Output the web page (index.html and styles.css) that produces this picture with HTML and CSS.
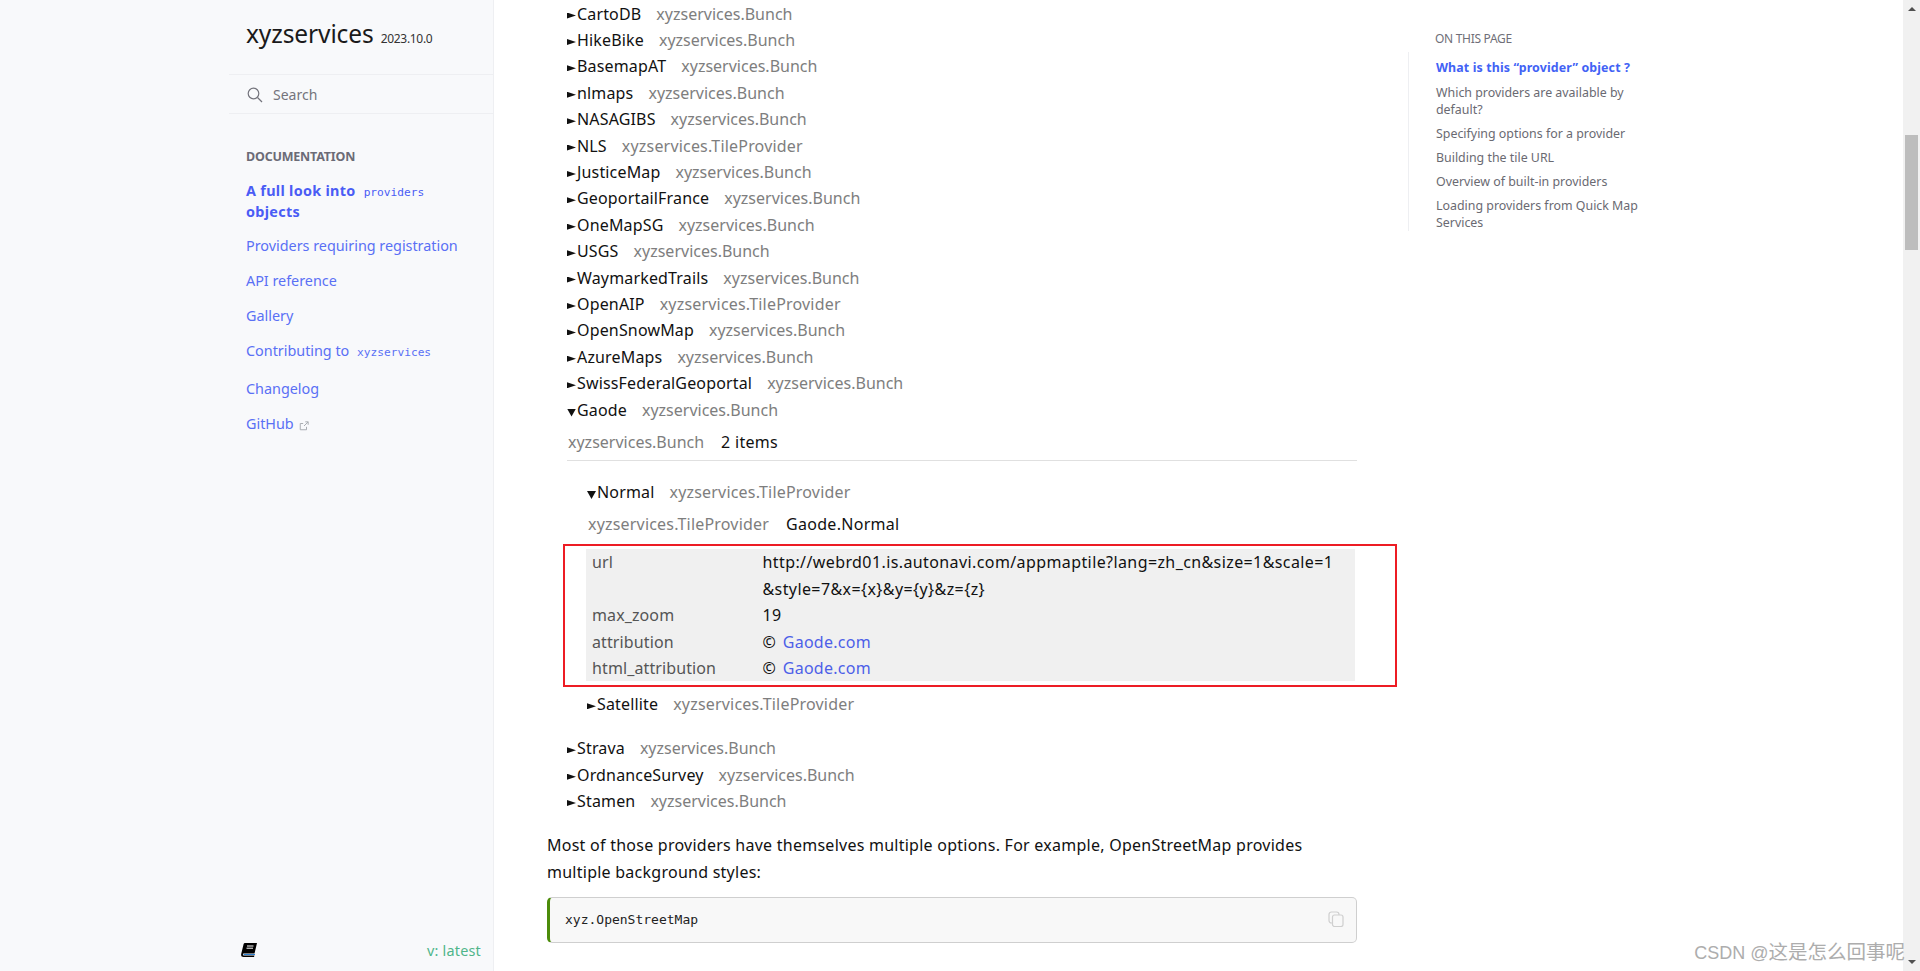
FILE: index.html
```html
<!DOCTYPE html>
<html lang="en">
<head>
<meta charset="utf-8">
<title>xyzservices</title>
<link rel="stylesheet" href="styles.css">
</head>
<body>
<aside class="sidebar">
  <div class="brand"><span class="brand-name">xyzservices</span><span class="brand-ver">2023.10.0</span></div>
  <div class="search">
    <svg class="search-icon" viewBox="0 0 16 16" width="16" height="16"><circle cx="6.5" cy="6.5" r="5.3"/><path d="M10.5 10.5L15 15"/></svg>
    <span>Search</span>
  </div>
  <nav class="nav">
    <div class="nav-title">DOCUMENTATION</div>
    <a class="nav-link current">A full look into <code class="nav-code">providers</code> objects</a>
    <a class="nav-link">Providers requiring registration</a>
    <a class="nav-link">API reference</a>
    <a class="nav-link">Gallery</a>
    <a class="nav-link tall">Contributing to <code class="nav-code">xyzservices</code></a>
    <a class="nav-link">Changelog</a>
    <a class="nav-link">GitHub <svg class="ext" viewBox="0 0 12 12" width="10" height="10"><path d="M9 7v3.5H1.5V3H5M6 6l5-5M7.5 1H11v3.5"/></svg></a>
  </nav>
  <div class="side-foot">
    <svg class="book" viewBox="0 0 16 14" width="16" height="14"><path class="book-body" d="M4 0H16L13.5 10.5H3C1.5 10.5 1.5 12.5 3 12.5H13.5L13 14H2.5C.5 14-.3 12.5.3 10.5L2.5 1.5C2.7.5 3.3 0 4 0Z"/><path class="book-lines" d="M6 3h6.5M5.5 5.2h6.5"/><path class="book-page" d="M2.6 11.5H14"/></svg>
    <span class="version">v: latest</span>
  </div>
</aside>
<main class="content">
  <div class="list">
    <div class="row"><i class="tri"></i>CartoDB<span class="type">xyzservices.Bunch</span></div>
    <div class="row"><i class="tri"></i>HikeBike<span class="type">xyzservices.Bunch</span></div>
    <div class="row"><i class="tri"></i>BasemapAT<span class="type">xyzservices.Bunch</span></div>
    <div class="row"><i class="tri"></i>nlmaps<span class="type">xyzservices.Bunch</span></div>
    <div class="row"><i class="tri"></i>NASAGIBS<span class="type">xyzservices.Bunch</span></div>
    <div class="row"><i class="tri"></i>NLS<span class="type tile">xyzservices.TileProvider</span></div>
    <div class="row"><i class="tri"></i>JusticeMap<span class="type">xyzservices.Bunch</span></div>
    <div class="row"><i class="tri"></i>GeoportailFrance<span class="type">xyzservices.Bunch</span></div>
    <div class="row"><i class="tri"></i>OneMapSG<span class="type">xyzservices.Bunch</span></div>
    <div class="row"><i class="tri"></i>USGS<span class="type">xyzservices.Bunch</span></div>
    <div class="row"><i class="tri"></i>WaymarkedTrails<span class="type">xyzservices.Bunch</span></div>
    <div class="row"><i class="tri"></i>OpenAIP<span class="type tile">xyzservices.TileProvider</span></div>
    <div class="row"><i class="tri"></i>OpenSnowMap<span class="type">xyzservices.Bunch</span></div>
    <div class="row"><i class="tri"></i>AzureMaps<span class="type">xyzservices.Bunch</span></div>
    <div class="row"><i class="tri"></i>SwissFederalGeoportal<span class="type">xyzservices.Bunch</span></div>
    <div class="row"><i class="tri open"></i>Gaode<span class="type">xyzservices.Bunch</span></div>
    <div class="head head-rule"><span class="head-type">xyzservices.Bunch</span><span class="head-val">2 items</span></div>
    <div class="nest">
      <div class="row nest-first"><i class="tri open"></i>Normal<span class="type tile">xyzservices.TileProvider</span></div>
      <div class="head head-sub"><span class="head-type tile">xyzservices.TileProvider</span><span class="head-val">Gaode.Normal</span></div>
      <div class="attrs">
        <div class="attr-key">url</div><div class="attr-val">http://webrd01.is.autonavi.com/appmaptile?lang=zh_cn&amp;size=1&amp;scale=1<br>&amp;style=7&amp;x={x}&amp;y={y}&amp;z={z}</div>
        <div class="attr-key">max_zoom</div><div class="attr-val">19</div>
        <div class="attr-key">attribution</div><div class="attr-val">© <a class="link">Gaode.com</a></div>
        <div class="attr-key">html_attribution</div><div class="attr-val">© <a class="link">Gaode.com</a></div>
      </div>
      <div class="highlight"></div>
      <div class="row after-attrs"><i class="tri"></i>Satellite<span class="type tile">xyzservices.TileProvider</span></div>
    </div>
    <div class="row after-nest"><i class="tri"></i>Strava<span class="type">xyzservices.Bunch</span></div>
    <div class="row"><i class="tri"></i>OrdnanceSurvey<span class="type">xyzservices.Bunch</span></div>
    <div class="row"><i class="tri"></i>Stamen<span class="type">xyzservices.Bunch</span></div>
  </div>
  <p class="para">Most of those providers have themselves multiple options. For example, OpenStreetMap provides<br>multiple background styles:</p>
  <div class="code">
    <code class="code-text">xyz.OpenStreetMap</code>
    <svg class="copy" viewBox="0 0 16 16" width="16" height="16"><rect x="1" y="1" width="10" height="11" rx="2.5"/><rect class="copy-front" x="4.5" y="4" width="10.5" height="11.5" rx="2"/></svg>
  </div>
</main>
<aside class="toc">
  <div class="toc-title">ON THIS PAGE</div>
  <ul class="toc-list">
    <li class="toc-item active">What is this “provider” object ?</li>
    <li class="toc-item">Which providers are available by default?</li>
    <li class="toc-item">Specifying options for a provider</li>
    <li class="toc-item">Building the tile URL</li>
    <li class="toc-item">Overview of built-in providers</li>
    <li class="toc-item">Loading providers from Quick Map Services</li>
  </ul>
</aside>
<div class="scrollbar">
  <i class="sb-up"></i>
  <div class="sb-thumb"></div>
  <i class="sb-down"></i>
</div>
<div class="watermark"><span class="wm-latin">CSDN @</span>这是怎么回事呢</div>
</body>
</html>
```
FILE: styles.css
```css
* { box-sizing: border-box; }
html, body { height: 100%; }
body {
  margin: 0;
  display: flex;
  height: 971px;
  overflow: hidden;
  background: #fff;
  color: #111;
  font-family: "Noto Sans", "Open Sans", sans-serif;
  font-size: 16px;
  position: relative;
}
.sidebar {
  width: 494px;
  flex: none;
  height: 100%;
  background: #f8f9fb;
  border-right: 1px solid #eeeff2;
  padding-left: 229px;
  display: flex;
  flex-direction: column;
}
.brand {
  height: 74px;
  padding: 19px 0 0 17px;
  display: flex;
  align-items: baseline;
  white-space: nowrap;
}
.brand-name { font-size: 24.5px; line-height: 30px; letter-spacing: -0.1px; color: #1a1a1a; }
.brand-ver { font-size: 12px; margin-left: 7px; letter-spacing: -0.3px; color: #333; }
.search {
  height: 40px;
  border-top: 1px solid #eeeff2;
  border-bottom: 1px solid #eeeff2;
  padding-left: 18px;
  padding-top: 1px;
  display: flex;
  align-items: center;
  font-size: 14px;
  color: #74747c;
}
.search-icon { fill: none; stroke: #74747c; stroke-width: 1.2; margin-right: 10px; }
.nav { padding: 33px 20px 0 17px; display: flex; flex-direction: column; }
.nav-title { font-size: 12.5px; font-weight: 700; line-height: 20px; color: #6b6b76; letter-spacing: -0.2px; margin-bottom: 13.5px; }
.nav-link { font-size: 14.4px; line-height: 20px; color: #5a70f5; margin-bottom: 15px; letter-spacing: -0.02px; }
.nav-link.tall { padding: 0.5px 0; }
.nav-link.current { font-weight: 700; color: #4a5cf5; letter-spacing: 0.3px; line-height: 19px; margin-bottom: 15px; }
.nav-code { font-family: "DejaVu Sans Mono", "Liberation Mono", monospace; font-size: 11.2px; font-weight: 400; letter-spacing: 0; margin-left: 4px; }
.ext { fill: none; stroke: #a9adb2; stroke-width: 1.2; margin-left: 2px; vertical-align: -2px; }
.side-foot {
  margin-top: auto;
  height: 42px;
  padding: 0 12px 0 12px;
  display: flex;
  align-items: center;
  justify-content: space-between;
}
.book-body { fill: #000; }
.book-lines { stroke: #fff; stroke-width: 1; fill: none; }
.book-page { stroke: #2a7fd0; stroke-width: 1; fill: none; }
.version { font-size: 14.4px; color: #4fb58a; letter-spacing: 0.2px; }
.content {
  width: 863px;
  flex: none;
  padding: 0.5px 0 0 53px;
}
.list { padding-left: 20px; }
.row { line-height: 26.4px; white-space: nowrap; letter-spacing: 0.16px; }
.type { color: #7e7e7e; margin-left: 15px; letter-spacing: 0; }
.tile { letter-spacing: 0.19px; }
.tri {
  display: inline-block;
  width: 9px;
  height: 6px;
  margin-right: 1px;
  background: #111;
  clip-path: polygon(0 0, 100% 50%, 0 100%);
  vertical-align: 1px;
}
.tri.open {
  height: 8px;
  clip-path: polygon(0 0, 100% 0, 50% 100%);
  vertical-align: -1px;
}
.head { line-height: 26.4px; white-space: nowrap; padding-left: 1px; }
.head-rule { margin-top: 6px; padding-bottom: 5px; border-bottom: 1px solid #e0e0e0; height: 32px; }
.head-sub { margin-top: 6px; }
.head-type { color: #7e7e7e; margin-right: 17px; }
.head-val { color: #111; letter-spacing: 0.29px; }
.nest { padding-left: 20px; position: relative; }
.nest-first { margin-top: 18px; }
.attrs {
  margin-top: 11.5px;
  background: #f0f0f0;
  display: grid;
  grid-template-columns: 170.5px 1fr;
  line-height: 26.4px;
  margin-left: -1px;
  width: 769px;
  padding-left: 6px;
}
.attr-key { color: #555; letter-spacing: 0.11px; }
.attr-val { color: #111; white-space: nowrap; letter-spacing: 0.4px; }
.link { color: #4d5fe8; letter-spacing: 0.26px; margin-left: 2px; }
.highlight {
  position: absolute;
  left: -4px;
  top: 65px;
  width: 834px;
  height: 143px;
  border: 2px solid #ed1c24;
}
.after-attrs { margin-top: 10px; }
.after-nest { margin-top: 17.5px; }
.para { margin: 18px 0 0; line-height: 26.4px; color: #111; letter-spacing: 0.25px; }
.code {
  margin-top: 11.5px;
  width: 810px;
  height: 46px;
  background: #f8f8f8;
  border: 1px solid #cfcfcf;
  border-left: 3px solid #4c8c0a;
  border-radius: 5px;
  padding: 0 12px 1px 15px;
  display: flex;
  align-items: center;
  justify-content: space-between;
}
.code-text { font-family: "DejaVu Sans Mono", "Liberation Mono", monospace; font-size: 13px; color: #222; }
.copy { fill: none; stroke: #cfcfcf; stroke-width: 1.2; }
.copy-front { fill: #f8f8f8; }
.toc {
  width: 546px;
  flex: none;
  padding: 31px 0 0 78px;
}
.toc-title { font-size: 12px; line-height: 16px; color: #6f6f78; letter-spacing: -0.3px; }
.toc-list {
  list-style: none;
  margin: 5px 0 0 -27px;
  padding: 7px 0 0 27px;
  border-left: 1px solid #eeeff2;
  width: 250px;
  height: 179px;
}
.toc-item { font-size: 12.4px; line-height: 17px; color: #6a6a72; margin-bottom: 7px; }
.toc-item.active { font-weight: 700; color: #4262f5; letter-spacing: 0.13px; margin-bottom: 7.5px; }
.scrollbar {
  position: absolute;
  right: 0;
  top: 0;
  width: 17px;
  height: 100%;
  background: #f1f1f1;
  display: flex;
  flex-direction: column;
  align-items: center;
  padding: 7px 0;
}
.sb-up { border: 4px solid transparent; border-top: 0; border-bottom: 4px solid #505050; }
.sb-down { border: 4px solid transparent; border-bottom: 0; border-top: 4px solid #505050; margin-top: auto; }
.sb-thumb { width: 13px; height: 115px; background: #bdbdbd; margin-top: 124px; }
.watermark {
  position: absolute;
  right: 15px;
  top: 938px;
  font-size: 19.5px;
  line-height: 26px;
  font-family: "Noto Sans CJK SC", sans-serif;
  color: #adadad;
  white-space: nowrap;
}
.wm-latin { font-family: "Liberation Sans", sans-serif; font-size: 18px; }
```
